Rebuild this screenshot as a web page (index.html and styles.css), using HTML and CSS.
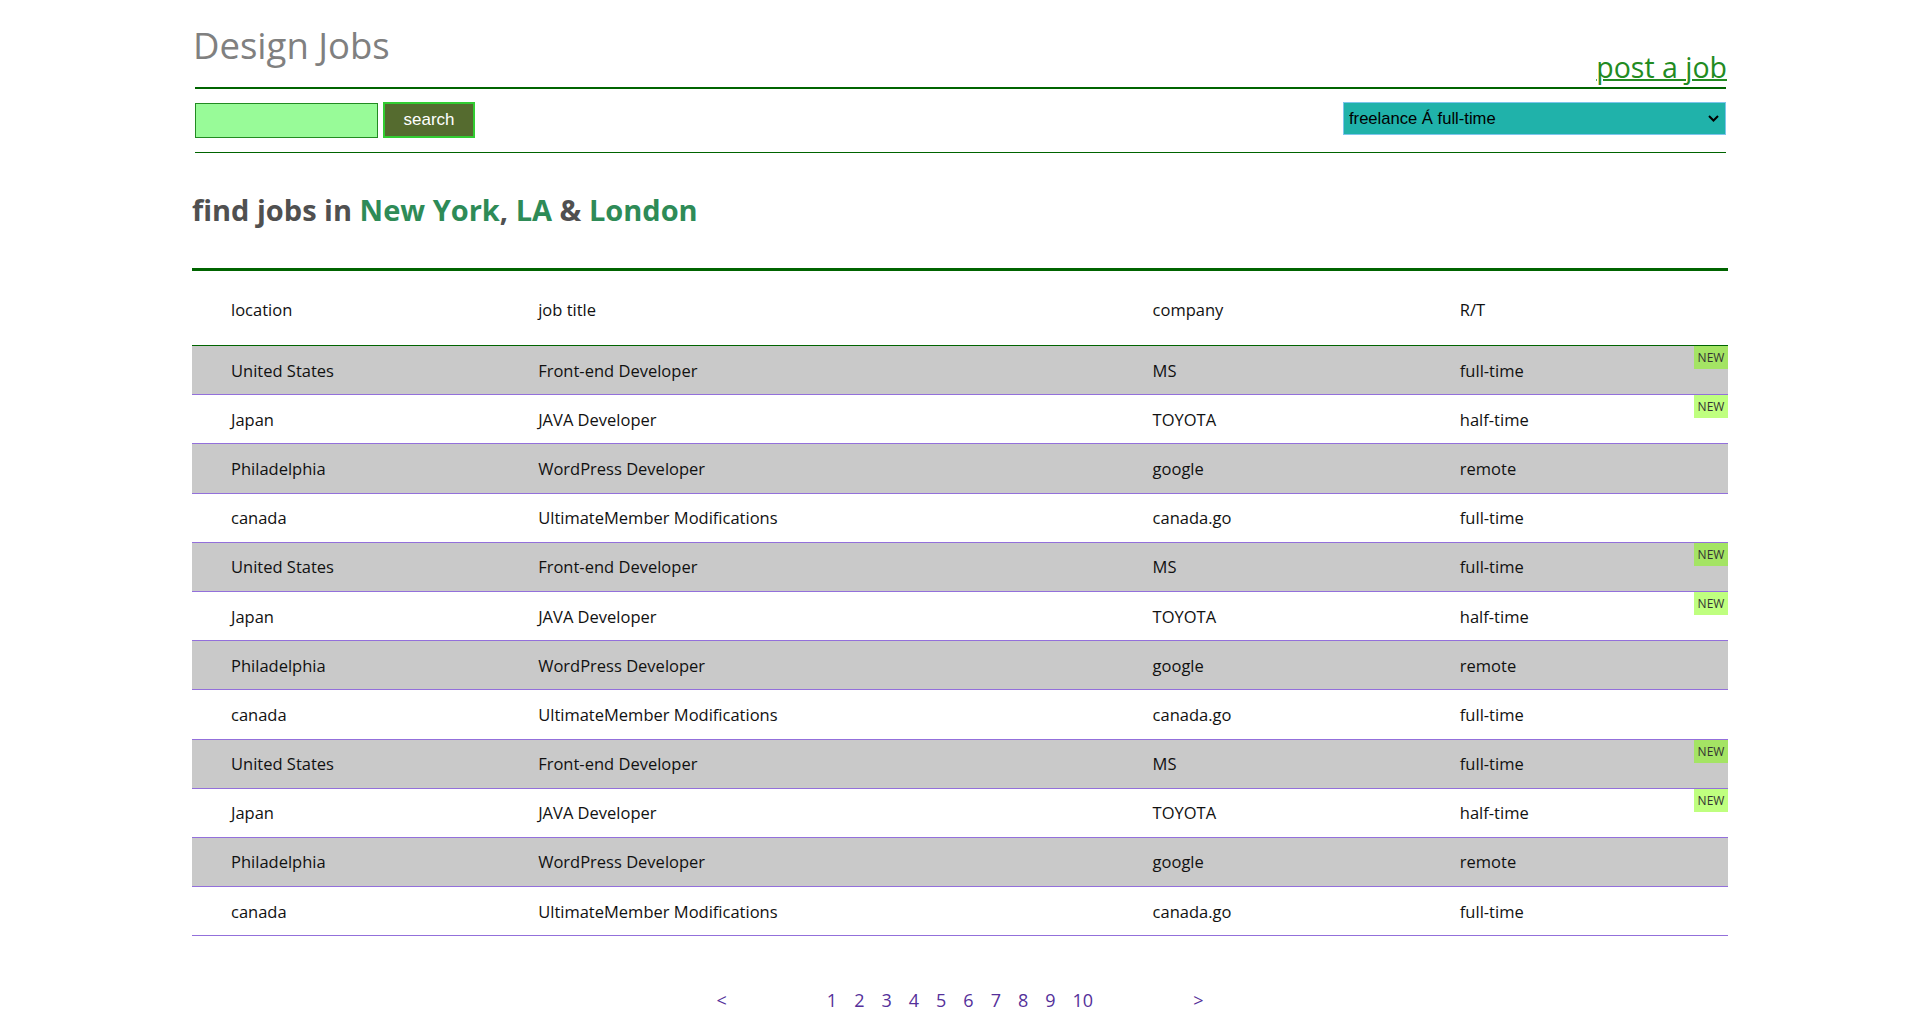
FILE: index.html
```html
<!DOCTYPE html>
<html lang="en">
<head>
<meta charset="utf-8">
<title>Design Jobs</title>
<link rel="stylesheet" href="styles.css">
</head>
<body>
<div class="page">
  <header class="top">
    <div class="brand-row">
      <h1 class="brand">Design Jobs</h1>
      <a class="post" href="#">post a job</a>
    </div>
    <div class="toolbar">
      <form class="search">
        <input class="search-input" type="text">
        <button class="search-btn" type="button">search</button>
      </form>
      <div class="select-wrap">
        <select class="type-select">
          <option>freelance Á full-time</option>
        </select>
        <svg class="chev" viewBox="0 0 11 7" width="11" height="7"><path d="M1 1 L5.5 5.5 L10 1" fill="none" stroke="#000" stroke-width="2"/></svg>
      </div>
    </div>
  </header>

  <h2 class="lead">find jobs in <span class="city">New York</span>, <span class="city">LA</span> &amp; <span class="city">London</span></h2>

  <div class="jobs">
    <div class="jobs-head">
      <div class="cell">location</div>
      <div class="cell">job title</div>
      <div class="cell">company</div>
      <div class="cell">R/T</div>
    </div>
    <div class="jobs-body">
      <div class="row"><div class="cell">United States</div><div class="cell">Front-end Developer</div><div class="cell">MS</div><div class="cell">full-time</div><span class="badge">NEW</span></div>
      <div class="row"><div class="cell">Japan</div><div class="cell">JAVA Developer</div><div class="cell">TOYOTA</div><div class="cell">half-time</div><span class="badge">NEW</span></div>
      <div class="row"><div class="cell">Philadelphia</div><div class="cell">WordPress Developer</div><div class="cell">google</div><div class="cell">remote</div></div>
      <div class="row"><div class="cell">canada</div><div class="cell">UltimateMember Modifications</div><div class="cell">canada.go</div><div class="cell">full-time</div></div>
      <div class="row"><div class="cell">United States</div><div class="cell">Front-end Developer</div><div class="cell">MS</div><div class="cell">full-time</div><span class="badge">NEW</span></div>
      <div class="row"><div class="cell">Japan</div><div class="cell">JAVA Developer</div><div class="cell">TOYOTA</div><div class="cell">half-time</div><span class="badge">NEW</span></div>
      <div class="row"><div class="cell">Philadelphia</div><div class="cell">WordPress Developer</div><div class="cell">google</div><div class="cell">remote</div></div>
      <div class="row"><div class="cell">canada</div><div class="cell">UltimateMember Modifications</div><div class="cell">canada.go</div><div class="cell">full-time</div></div>
      <div class="row"><div class="cell">United States</div><div class="cell">Front-end Developer</div><div class="cell">MS</div><div class="cell">full-time</div><span class="badge">NEW</span></div>
      <div class="row"><div class="cell">Japan</div><div class="cell">JAVA Developer</div><div class="cell">TOYOTA</div><div class="cell">half-time</div><span class="badge">NEW</span></div>
      <div class="row"><div class="cell">Philadelphia</div><div class="cell">WordPress Developer</div><div class="cell">google</div><div class="cell">remote</div></div>
      <div class="row"><div class="cell">canada</div><div class="cell">UltimateMember Modifications</div><div class="cell">canada.go</div><div class="cell">full-time</div></div>
    </div>
  </div>

  <nav class="pager">
    <a class="prev" href="#">&lt;</a>
    <div class="pages">
      <a href="#">1</a><a href="#">2</a><a href="#">3</a><a href="#">4</a><a href="#">5</a><a href="#">6</a><a href="#">7</a><a href="#">8</a><a href="#">9</a><a href="#">10</a>
    </div>
    <a class="next" href="#">&gt;</a>
  </nav>
</div>
</body>
</html>
```

FILE: styles.css
```css
* { box-sizing: border-box; }

html, body {
  margin: 0;
  padding: 0;
  background: #ffffff;
}

body {
  font-family: "Open Sans", "Noto Sans", sans-serif;
  color: #111111;
}

.page {
  width: 1536px;
  margin: 0 auto;
}

/* ---------- header ---------- */
.top {
  margin: 0 2px 0 3px;
}

.brand-row {
  display: flex;
  justify-content: space-between;
  align-items: flex-end;
  height: 89px;
  border-bottom: 2px solid #006400;
}

.brand {
  margin: 0 0 21px -2px;
  font-size: 36.5px;
  line-height: 42px;
  font-weight: 400;
  color: #808080;
}

.post {
  margin: 0 -1px 3px 0;
  font-size: 28.5px;
  line-height: 34px;
  color: #228b22;
  text-decoration: underline;
  text-decoration-thickness: 2px;
}

.toolbar {
  display: flex;
  justify-content: space-between;
  align-items: flex-start;
  height: 64px;
  padding: 13px 0 14px;
  border-bottom: 1px solid #006400;
}

.search {
  display: flex;
  align-items: flex-start;
  gap: 5px;
  margin: 0;
}

.search-input {
  width: 183px;
  height: 35px;
  margin: 1px 0 0;
  padding: 0 4px;
  background: #98fb98;
  border: 1px solid #228b22;
  outline: none;
}

.search-btn {
  width: 92px;
  height: 36px;
  padding: 0;
  background: #556b2f;
  border: 2px solid #32cd32;
  color: #ffffff;
  font-family: "Liberation Sans", Arial, sans-serif;
  font-size: 17px;
}

.select-wrap {
  position: relative;
  width: 383px;
  height: 33px;
}

.type-select {
  appearance: none;
  -webkit-appearance: none;
  width: 100%;
  height: 100%;
  margin: 0;
  padding: 0 30px 0 5px;
  background: #20b2aa;
  border: 1px solid #7cc5ec;
  border-radius: 0;
  color: #000000;
  font-family: "Liberation Sans", Arial, sans-serif;
  font-size: 16.6px;
  outline: none;
}

.chev {
  position: absolute;
  right: 7px;
  top: 13px;
  pointer-events: none;
}

/* ---------- heading ---------- */
.lead {
  margin: 40px 0 0;
  font-size: 29px;
  line-height: 34px;
  font-weight: 700;
  color: #505050;
}

.city {
  color: #2e8b57;
}

/* ---------- table ---------- */
.jobs {
  margin-top: 41px;
  border-top: 3px solid #006400;
}

.jobs-head,
.row {
  display: grid;
  grid-template-columns: 1fr 2fr 1fr 1fr;
  align-items: center;
  font-size: 16.5px;
}

.jobs-head {
  height: 75px;
  padding-top: 2px;
  border-bottom: 1px solid #006400;
}

.row {
  position: relative;
  height: 49.2px;
  border-bottom: 1px solid #9370db;
}

.jobs-body .row:nth-child(odd) {
  background: #c9c9c9;
}

.cell {
  padding-left: 39px;
  white-space: nowrap;
}

.badge {
  position: absolute;
  top: 0;
  right: 0;
  width: 34px;
  height: 23px;
  background: rgba(127, 255, 0, 0.5);
  color: #333333;
  font-size: 12px;
  line-height: 23px;
  text-align: center;
}

/* ---------- pager ---------- */
.pager {
  display: flex;
  justify-content: center;
  align-items: baseline;
  margin-top: 52px;
  font-size: 18px;
}

.pager a {
  color: #55309a;
  text-decoration: none;
}

.prev { margin-right: 100px; }
.next { margin-left: 100px; }

.pages {
  display: flex;
  gap: 17px;
}
```
